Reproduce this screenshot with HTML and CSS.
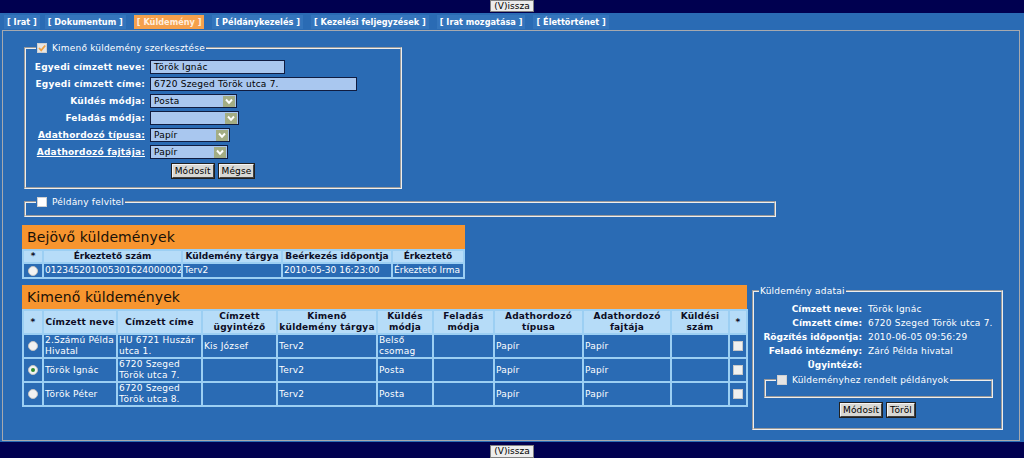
FILE: index.html
```html
<!DOCTYPE html>
<html lang="hu">
<head>
<meta charset="utf-8">
<title>Küldemény</title>
<link rel="stylesheet" href="styles.css">
</head>
<body>
<div class="topbar"><button class="btn back">(V)issza</button></div>
<div class="wrap">
  <nav class="tabs">
    <span class="tab">[ Irat ]</span>
    <span class="tab">[ Dokumentum ]</span>
    <span class="tab active">[ Küldemény ]</span>
    <span class="tab">[ Példánykezelés ]</span>
    <span class="tab">[ Kezelési feljegyzések ]</span>
    <span class="tab">[ Irat mozgatása ]</span>
    <span class="tab">[ Élettörténet ]</span>
  </nav>
  <main class="panel">
    <fieldset class="fs fs-edit">
      <legend><span class="cb cb-dis"><svg viewBox="0 0 10 10" width="10" height="10"><path d="M2 5 L4.2 7.3 L8.2 2.5" fill="none" stroke="#f0a040" stroke-width="1.8"/></svg></span>Kimenő küldemény szerkesztése</legend>
      <div class="form">
        <span class="lbl">Egyedi címzett neve:</span><div class="inp w-name">Török Ignác</div>
        <span class="lbl">Egyedi címzett címe:</span><div class="inp w-addr">6720 Szeged Török utca 7.</div>
        <span class="lbl">Küldés módja:</span><div class="sel w-kuld"><span class="sel-txt">Posta</span><span class="arr"><svg viewBox="0 0 12 11" width="12" height="11"><path d="M3 3.5 L6 6.8 L9 3.5" fill="none" stroke="#fff" stroke-width="2"/></svg></span></div>
        <span class="lbl">Feladás módja:</span><div class="sel w-fel"><span class="sel-txt"></span><span class="arr"><svg viewBox="0 0 12 11" width="12" height="11"><path d="M3 3.5 L6 6.8 L9 3.5" fill="none" stroke="#fff" stroke-width="2"/></svg></span></div>
        <span class="lbl link">Adathordozó típusa: </span><div class="sel w-tip"><span class="sel-txt">Papír</span><span class="arr"><svg viewBox="0 0 12 11" width="12" height="11"><path d="M3 3.5 L6 6.8 L9 3.5" fill="none" stroke="#fff" stroke-width="2"/></svg></span></div>
        <span class="lbl link">Adathordozó fajtája: </span><div class="sel w-faj"><span class="sel-txt">Papír</span><span class="arr"><svg viewBox="0 0 12 11" width="12" height="11"><path d="M3 3.5 L6 6.8 L9 3.5" fill="none" stroke="#fff" stroke-width="2"/></svg></span></div>
      </div>
      <div class="btns"><button class="btn">Módosít</button><button class="btn">Mégse</button></div>
    </fieldset>

    <fieldset class="fs fs-pld">
      <legend><span class="cb"></span>Példány felvitel</legend>
    </fieldset>

    <section class="box box-in">
      <h2 class="box-title">Bejövő küldemények</h2>
      <table class="grid">
        <colgroup><col style="width:18px"><col style="width:137px"><col style="width:98px"><col style="width:108px"><col style="width:70px"></colgroup>
        <thead>
          <tr class="h1"><th>*</th><th>Érkeztető szám</th><th>Küldemény tárgya</th><th>Beérkezés időpontja</th><th>Érkeztető</th></tr>
        </thead>
        <tbody>
          <tr class="r1"><td class="c"><span class="radio"></span></td><td>012345201005301624000002</td><td>Terv2</td><td>2010-05-30 16:23:00</td><td>Érkeztető Irma</td></tr>
        </tbody>
      </table>
    </section>

    <div class="row">
      <section class="box box-out">
        <h2 class="box-title">Kimenő küldemények</h2>
        <table class="grid">
          <colgroup><col style="width:18px"><col style="width:72px"><col style="width:83px"><col style="width:73px"><col style="width:98px"><col style="width:54px"><col style="width:59px"><col style="width:87px"><col style="width:86px"><col style="width:56px"><col style="width:16px"></colgroup>
          <thead>
            <tr class="h2"><th>*</th><th>Címzett neve</th><th>Címzett címe</th><th>Címzett<br>ügyintéző</th><th>Kimenő<br>küldemény tárgya</th><th>Küldés<br>módja</th><th>Feladás<br>módja</th><th>Adathordozó<br>típusa</th><th>Adathordozó<br>fajtája</th><th>Küldési<br>szám</th><th>*</th></tr>
          </thead>
          <tbody>
            <tr class="r2"><td class="c"><span class="radio"></span></td><td>2.Számú Példa Hivatal</td><td>HU 6721 Huszár utca 1.</td><td>Kis József</td><td>Terv2</td><td>Belső csomag</td><td></td><td>Papír</td><td>Papír</td><td></td><td class="c"><span class="chk"></span></td></tr>
            <tr class="r2"><td class="c"><span class="radio on"></span></td><td>Török Ignác</td><td>6720 Szeged Török utca 7.</td><td></td><td>Terv2</td><td>Posta</td><td></td><td>Papír</td><td>Papír</td><td></td><td class="c"><span class="chk"></span></td></tr>
            <tr class="r2"><td class="c"><span class="radio"></span></td><td>Török Péter</td><td>6720 Szeged Török utca 8.</td><td></td><td>Terv2</td><td>Posta</td><td></td><td>Papír</td><td>Papír</td><td></td><td class="c"><span class="chk"></span></td></tr>
          </tbody>
        </table>
      </section>

      <fieldset class="fs fs-data">
        <legend>Küldemény adatai</legend>
        <div class="data">
          <span class="lbl">Címzett neve:</span><span class="val">Török Ignác</span>
          <span class="lbl">Címzett címe:</span><span class="val">6720 Szeged Török utca 7.</span>
          <span class="lbl">Rögzítés időpontja:</span><span class="val">2010-06-05 09:56:29</span>
          <span class="lbl">Feladó intézmény:</span><span class="val">Záró Példa hivatal</span>
          <span class="lbl">Ügyintéző:</span><span class="val"></span>
        </div>
        <fieldset class="fs fs-inner">
          <legend><span class="cb cb-grey"></span>Küldeményhez rendelt példányok</legend>
        </fieldset>
        <div class="btns"><button class="btn">Módosít</button><button class="btn">Töröl</button></div>
      </fieldset>
    </div>
  </main>
</div>
<div class="bottombar"><button class="btn back">(V)issza</button></div>
</body>
</html>
```

FILE: styles.css
```css
* { box-sizing: border-box; }
html, body { margin: 0; padding: 0; }
body {
  width: 1024px;
  height: 458px;
  overflow: hidden;
  background: #000050;
  font-family: "DejaVu Sans", Verdana, sans-serif;
  font-size: 9px;
  line-height: 12px;
  letter-spacing: 0.2px;
  color: #fff;
}

.btn {
  font: inherit;
  font-size: 9px;
  line-height: 12px;
  letter-spacing: 0.1px;
  height: 14px;
  padding: 0 2px;
  margin: 0;
  color: #000;
  background: #d8d8d4;
  border: 1px solid;
  border-color: #f4f4f4 #404040 #404040 #f4f4f4;
  box-shadow: 0 0 0 1px #202020;
  border-radius: 0;
}

.topbar {
  height: 13px;
  display: flex;
  justify-content: center;
  align-items: flex-start;
}
.topbar .back { height: 12px; line-height: 10px; width: 44px; box-shadow: none; border: 1px solid #808080; background: #ececec; letter-spacing: 0; }

.bottombar {
  height: 16px;
  display: flex;
  justify-content: center;
  align-items: flex-end;
}
.bottombar .back { height: 13px; line-height: 11px; width: 44px; box-shadow: none; border: 1px solid #808080; background: #ececec; letter-spacing: 0; }

.wrap {
  height: 429px;
  background: #2a6bb4;
  padding: 0 4px 0 2px;
}

.tabs {
  height: 17px;
  display: flex;
  gap: 8px;
  padding: 2px 0 0 2px;
}
.tab {
  height: 14px;
  line-height: 14px;
  padding: 0 3px;
  font-size: 8.2px;
  letter-spacing: 0;
  font-weight: bold;
  background: #3475bc;
  color: #fff;
  white-space: nowrap;
}
.tab:first-child { margin-right: -3px; }
.tab.active { background: #f5a04c; color: #ffeede; }

.panel {
  display: block;
  height: 411px;
  border: 1px solid #a7a9ae;
  padding: 11px 0 0 19px;
}

/* fieldsets */
.fs {
  margin: 0;
  border: 2px groove #eeeeee;
  min-width: 0;
}
.fs legend {
  padding: 0 1px;
  line-height: 12px;
  height: 12px;
  display: flex;
  align-items: center;
  gap: 5px;
  color: #fff;
}
.cb {
  display: inline-block;
  width: 10px;
  height: 10px;
  background: #ffffff;
  border: 1px solid #d0d0d0;
  position: relative;
}
.cb svg { position: absolute; left: -1px; top: -1px; }
.cb-dis { background: #e6e6e6; }
.cb-grey { background: #e4e4e4; }

.fs-edit {
  width: 378px;
  margin-left: 2px;
  padding: 6px 4px 9px 4px;
}
.fs-edit legend { margin-left: 6px; }

.form {
  display: grid;
  grid-template-columns: 115px 1fr;
  column-gap: 5px;
  row-gap: 3px;
}
.form .lbl {
  font-weight: bold;
  text-align: right;
  line-height: 14px;
  white-space: nowrap;
}
.lbl.link { text-decoration: underline; }

.inp, .sel {
  height: 14px;
  line-height: 12px;
  border: 1px solid #101c40;
  background: #a9c7ef;
  color: #000;
  padding: 0 3px;
  white-space: nowrap;
}
.w-name { width: 135px; }
.w-addr { width: 207px; }
.sel { display: flex; justify-content: space-between; align-items: center; padding: 0 1px 0 3px; }
.w-kuld { width: 87px; }
.w-fel { width: 89px; }
.w-tip { width: 80px; }
.w-faj { width: 78px; }
.arr {
  width: 12px;
  height: 11px;
  background: #a3ad84;
  display: block;
}
.arr svg { display: block; }

.btns {
  display: flex;
  justify-content: center;
  gap: 5px;
  margin-top: 5px;
}

.fs-pld {
  width: 752px;
  margin: 7px 0 0 2px;
  padding: 0 4px 7px 4px;
}
.fs-pld legend { margin-left: 6px; }

/* orange boxes */
.box { margin: 0; }
.box-title {
  margin: 0;
  height: 24px;
  line-height: 24px;
  background: #f7952f;
  color: #1a1208;
  font-weight: normal;
  font-size: 14px;
  letter-spacing: 0.1px;
  padding-left: 5px;
}
.box-in { width: 443px; margin-top: 8px; }
.box-out { width: 725px; }

.grid {
  table-layout: fixed;
  border-collapse: separate;
  border-spacing: 2px;
  background: #9ccff3;
  width: 100%;
}
.grid th {
  background: #b6dcf8;
  color: #0c0c24;
  font-weight: bold;
  text-align: center;
  padding: 0;
  line-height: 11px;
  vertical-align: middle;
  white-space: nowrap;
}
.grid td {
  background: #2a6bb4;
  color: #fff;
  padding: 0 1px;
  line-height: 11px;
  vertical-align: middle;
  overflow: hidden;
}
.grid td.c { text-align: center; padding: 0; }
.h1 th { height: 11px; letter-spacing: 0; }
.r1 td { height: 13px; white-space: nowrap; letter-spacing: 0; }
.h2 th { height: 22px; }
.r2 td { height: 22px; }

.radio {
  display: inline-block;
  width: 10px;
  height: 10px;
  border-radius: 50%;
  background: #f2f2f2;
  border: 1px solid #c4c4c4;
  vertical-align: middle;
  position: relative;
}
.radio.on::after {
  content: "";
  position: absolute;
  left: 2px;
  top: 2px;
  width: 4px;
  height: 4px;
  border-radius: 50%;
  background: #2f8a2f;
}
.chk {
  display: inline-block;
  width: 10px;
  height: 10px;
  background: #f0f0f0;
  border: 1px solid #c8c8c8;
  vertical-align: middle;
}

.row {
  display: flex;
  align-items: flex-start;
  margin-top: 6px;
}

.fs-data {
  width: 251px;
  margin: 0 0 0 5px;
  padding: 5px 6px 11px 6px;
}
.fs-data legend { margin-left: -1px; }
.data {
  display: grid;
  grid-template-columns: 102px 1fr;
  column-gap: 6px;
}
.data .lbl { font-weight: bold; text-align: right; line-height: 14px; white-space: nowrap; letter-spacing: 0; }
.data .val { line-height: 14px; white-space: nowrap; }

.fs-inner {
  width: 229px;
  margin: 2px 0 0 4px;
  padding: 0 4px 10px 4px;
}
.fs-inner legend { margin-left: 6px; }
```
